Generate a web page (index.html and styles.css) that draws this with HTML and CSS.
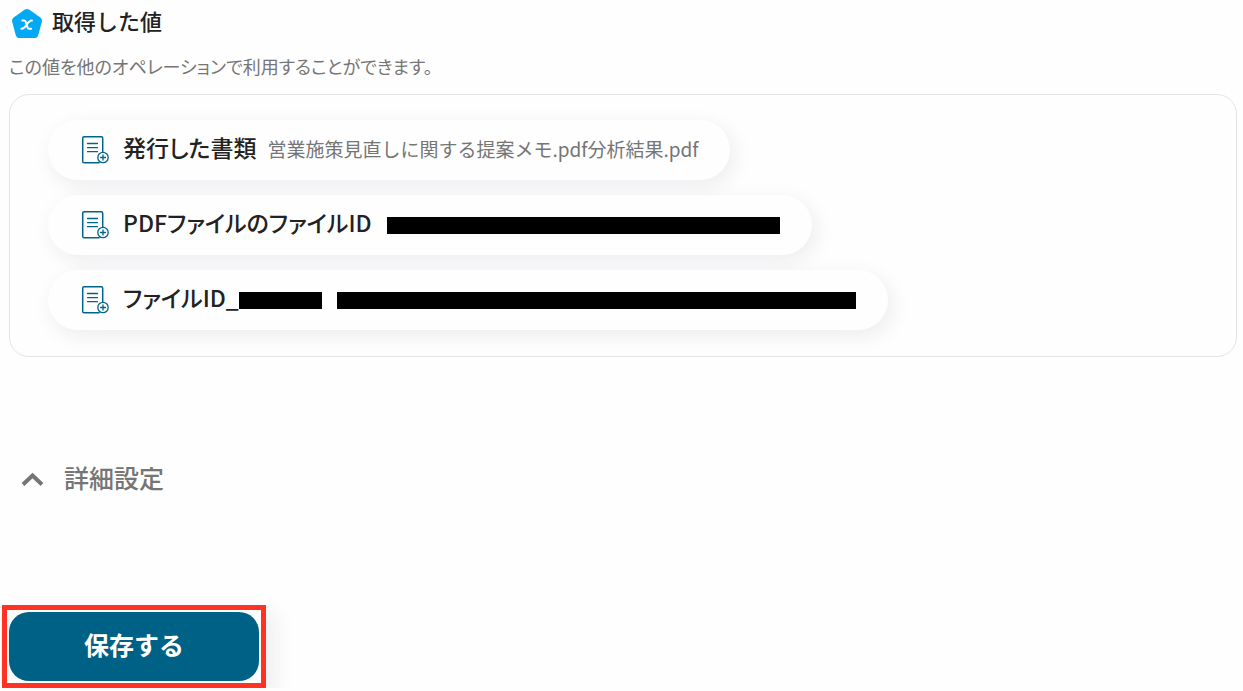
FILE: index.html
```html
<!DOCTYPE html>
<html lang="ja">
<head>
<meta charset="utf-8">
<title>取得した値</title>
<link rel="stylesheet" href="styles.css">
</head>
<body>
<svg class="sprite" aria-hidden="true">
  <symbol id="doc-add" viewBox="0 0 28 30">
    <g fill="none" stroke="currentColor" stroke-linecap="round" stroke-linejoin="round">
      <path stroke-width="1.5" d="M21.7 17V3.2Q21.7 1.8 20.3 1.8H3.1Q1.7 1.8 1.7 3.2v23.2Q1.7 27.8 3.1 27.8h15"/>
      <path stroke-width="1.3" d="M6.500 8.500h10M6.500 12.600h10M6.500 16.700h10"/>
      <circle stroke-width="1.3" cx="22" cy="22.500" r="5.200"/>
      <path stroke-width="1.3" d="M19.500 22.500h5M22 20v5"/>
    </g>
  </symbol>
</svg>
<main class="page">
  <header class="heading">
    <svg class="heading-icon" viewBox="0 0 32 32" aria-hidden="true">
      <path fill="#03a9f4" d="M13.6 1.8Q16 .3 18.4 1.8L29.4 9.4Q31.5 10.9 30.9 13.4L27.3 26.9Q26.5 30 23.4 30H8.6Q5.5 30 4.7 26.9L1.1 13.4Q.5 10.9 2.6 9.4Z"/>
      <path fill="none" stroke="#fff" stroke-width="2" stroke-linecap="round" stroke-linejoin="round" d="M11.300 12.600h1.900q1 0 1.400 1.100l2 5.900q.4 1.100 1.400 1.100h2.200M20.900 12.600c-2.200-.2-3.400 1.300-5.200 4.100s-2.900 4.200-5.300 4"/>
    </svg>
    <h1 class="title">取得した値</h1>
  </header>
  <p class="description">この値を他のオペレーションで利用することができます。</p>
  <ul class="values">
    <li class="pill">
      <svg class="doc-icon" aria-hidden="true"><use href="#doc-add"/></svg>
      <span class="name">発行した書類</span>
      <span class="value">営業施策見直しに関する提案メモ.pdf分析結果.pdf</span>
    </li>
    <li class="pill">
      <svg class="doc-icon" aria-hidden="true"><use href="#doc-add"/></svg>
      <span class="name">PDFファイルのファイルID</span>
      <span class="mask mask-medium"></span>
    </li>
    <li class="pill">
      <svg class="doc-icon" aria-hidden="true"><use href="#doc-add"/></svg>
      <span class="name">ファイルID_</span>
      <span class="mask mask-short"></span>
      <span class="mask mask-long"></span>
    </li>
  </ul>
  <button class="toggle" type="button">
    <svg class="chevron" viewBox="0 0 24 16" aria-hidden="true"><path d="M3 14.500 12.500 5.500l9.500 9" fill="none" stroke="currentColor" stroke-width="4"/></svg>
    <span class="toggle-label">詳細設定</span>
  </button>
  <div class="highlight">
    <button class="save" type="button">保存する</button>
  </div>
</main>
</body>
</html>
```
FILE: styles.css
```css
* {
  box-sizing: border-box;
}

body {
  margin: 0;
  background: #fefefe;
  color: #222;
  font-family: "Noto Sans CJK JP", sans-serif;
}

.sprite {
  position: absolute;
  width: 0;
  height: 0;
}

.page {
  display: flex;
  flex-direction: column;
  align-items: flex-start;
  padding: 5px 6px 0 9px;
}

.heading {
  display: flex;
  align-items: center;
  gap: 9px;
  padding-left: 2px;
}

.heading-icon {
  width: 32px;
  height: 32px;
  margin-top: 3px;
}

.title {
  margin: 0;
  padding-bottom: 4px;
  font-size: 22px;
  line-height: 31px;
  font-weight: 500;
}

.description {
  margin: 14px 0 0;
  font-size: 18px;
  line-height: 24px;
  font-feature-settings: "palt";
  color: #757575;
}

.values {
  display: flex;
  flex-direction: column;
  align-items: flex-start;
  gap: 15px;
  align-self: stretch;
  margin: 16px 0 0;
  padding: 25px 38px 26px;
  list-style: none;
  border: 1px solid #e5e3e8;
  border-radius: 20px;
}

.pill {
  display: flex;
  align-items: center;
  height: 60px;
  padding: 0 32px 0 33px;
  border-radius: 30px;
  background: #fefefe;
  box-shadow: 4px 6px 20px rgba(40, 20, 60, 0.08);
}

.doc-icon {
  width: 28px;
  height: 30px;
  margin-right: 14px;
  color: #006489;
}

.name {
  padding-bottom: 6px;
  font-size: 23px;
  line-height: 32px;
  font-weight: 500;
  font-feature-settings: "palt";
}

.value {
  margin-left: 11px;
  padding-bottom: 2px;
  font-size: 19px;
  line-height: 28px;
  color: #757575;
}

.mask {
  height: 17px;
  margin-left: 15px;
  background: #000;
}

.mask-short {
  width: 83px;
  margin-left: 0;
}

.mask-medium {
  width: 393px;
}

.mask-long {
  width: 519px;
}

.toggle {
  display: flex;
  align-items: center;
  gap: 20px;
  margin: 102px 0 0 11px;
  padding: 0;
  border: 0;
  background: none;
  color: #757575;
  font: 500 25px/36px "Noto Sans CJK JP", sans-serif;
}

.toggle-label {
  padding-bottom: 2px;
}

.chevron {
  width: 24px;
  height: 16px;
}

.highlight {
  margin: 108px 0 0 -7px;
  padding: 2px;
  border: 5px solid #ff3223;
  box-shadow: 8px 8px 20px rgba(40, 20, 60, 0.08);
}

.save {
  display: block;
  width: 250px;
  height: 69px;
  padding: 0 0 6px;
  border: 0;
  border-radius: 20px;
  background: #006187;
  color: #fff;
  font: 700 25px/36px "Noto Sans CJK JP", sans-serif;
}
```
